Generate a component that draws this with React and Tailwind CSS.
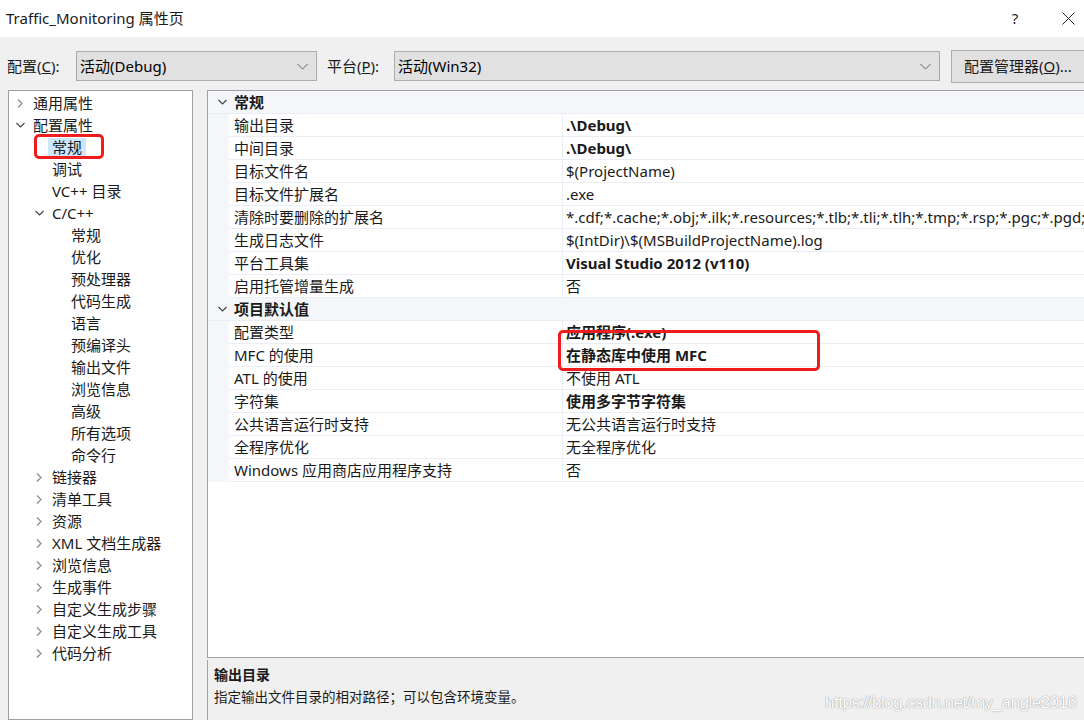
import React from 'react'

const FONT = { fontFamily: '"Noto Sans", "Noto Sans CJK SC", sans-serif' }

const tree = [
  { label: '通用属性', level: 0, chevron: 'right' },
  { label: '配置属性', level: 0, chevron: 'down' },
  { label: '常规', level: 1, selected: true },
  { label: '调试', level: 1 },
  { label: 'VC++ 目录', level: 1 },
  { label: 'C/C++', level: 1, chevron: 'down' },
  { label: '常规', level: 2 },
  { label: '优化', level: 2 },
  { label: '预处理器', level: 2 },
  { label: '代码生成', level: 2 },
  { label: '语言', level: 2 },
  { label: '预编译头', level: 2 },
  { label: '输出文件', level: 2 },
  { label: '浏览信息', level: 2 },
  { label: '高级', level: 2 },
  { label: '所有选项', level: 2 },
  { label: '命令行', level: 2 },
  { label: '链接器', level: 1, chevron: 'right' },
  { label: '清单工具', level: 1, chevron: 'right' },
  { label: '资源', level: 1, chevron: 'right' },
  { label: 'XML 文档生成器', level: 1, chevron: 'right' },
  { label: '浏览信息', level: 1, chevron: 'right' },
  { label: '生成事件', level: 1, chevron: 'right' },
  { label: '自定义生成步骤', level: 1, chevron: 'right' },
  { label: '自定义生成工具', level: 1, chevron: 'right' },
  { label: '代码分析', level: 1, chevron: 'right' },
]

const sections = [
  {
    title: '常规',
    rows: [
      ['输出目录', '.\\Debug\\', true],
      ['中间目录', '.\\Debug\\', true],
      ['目标文件名', '$(ProjectName)'],
      ['目标文件扩展名', '.exe'],
      ['清除时要删除的扩展名', '*.cdf;*.cache;*.obj;*.ilk;*.resources;*.tlb;*.tli;*.tlh;*.tmp;*.rsp;*.pgc;*.pgd;'],
      ['生成日志文件', '$(IntDir)\\$(MSBuildProjectName).log'],
      ['平台工具集', 'Visual Studio 2012 (v110)', true],
      ['启用托管增量生成', '否'],
    ],
  },
  {
    title: '项目默认值',
    rows: [
      ['配置类型', '应用程序(.exe)', true],
      ['MFC 的使用', '在静态库中使用 MFC', true],
      ['ATL 的使用', '不使用 ATL'],
      ['字符集', '使用多字节字符集', true],
      ['公共语言运行时支持', '无公共语言运行时支持'],
      ['全程序优化', '无全程序优化'],
      ['Windows 应用商店应用程序支持', '否'],
    ],
  },
]

function ChevronRight() {
  return (
    <svg width="6" height="9" viewBox="0 0 6 9" className="shrink-0">
      <path d="M1 0.5 L5 4.5 L1 8.5" fill="none" stroke="#8a8a8a" strokeWidth="1.2" />
    </svg>
  )
}

function ChevronDown() {
  return (
    <svg width="9" height="6" viewBox="0 0 9 6" className="shrink-0">
      <path d="M0.5 1 L4.5 5 L8.5 1" fill="none" stroke="#444" strokeWidth="1.2" />
    </svg>
  )
}

function ComboBox({ value, width }) {
  return (
    <div className={`h-[30px] ${width} shrink-0 bg-[#e1e1e1] border border-[#adadad] flex items-center justify-between pl-[3px] pr-[8px] text-[15px] text-black`}>
      <span>{value}</span>
      <svg width="11" height="7" viewBox="0 0 11 7">
        <path d="M0.5 1 L5.5 6 L10.5 1" fill="none" stroke="#606060" strokeWidth="1" />
      </svg>
    </div>
  )
}

function TreeRow({ item }) {
  const textLeft = { 0: 'pl-[24px]', 1: 'pl-[43px]', 2: 'pl-[62px]' }[item.level]
  const chevLeft = { 0: 'left-[5px]', 1: 'left-[24px]', 2: 'left-[43px]' }[item.level]
  return (
    <div className={`relative h-[22px] flex items-center ${textLeft} text-[15px] text-[#1a1a1a] whitespace-nowrap`}>
      {item.chevron && (
        <span className={`absolute ${chevLeft} top-0 h-[22px] w-[12px] flex items-center justify-center`}>
          {item.chevron === 'right' ? <ChevronRight /> : <ChevronDown />}
        </span>
      )}
      <span className={item.selected ? 'bg-[#cce8ff] px-[4px] -mx-[4px] leading-[18px]' : ''}>{item.label}</span>
      {item.selected && (
        <span className="absolute left-[25px] top-[-2px] w-[70px] h-[25px] border-[3px] border-[#f01c1c] rounded-[5px]" />
      )}
    </div>
  )
}

function Section({ section }) {
  return (
    <div>
      <div className="h-[23px] flex items-center bg-[#f4f6fa] border-b border-[#eaeef4]">
        <span className="w-[26px] flex justify-center pl-[2px]">
          <ChevronDown />
        </span>
        <span className="font-bold text-[15px] text-[#1a1a1a]">{section.title}</span>
      </div>
      {section.rows.map(([name, value, bold], i) => (
        <div key={i} className="h-[23px] flex bg-[#f4f6fa]">
          <div className="w-[21px] shrink-0" />
          <div className="w-[334px] shrink-0 bg-white border-r border-b border-[#eaeef4] flex items-center pl-[5px] text-[15px] text-[#1a1a1a] whitespace-nowrap">
            {name}
          </div>
          <div className={`flex-1 min-w-0 bg-white border-b border-[#eaeef4] flex items-center pl-[3px] text-[15px] text-[#1a1a1a] whitespace-nowrap overflow-hidden ${bold ? 'font-bold' : ''}`}>
            {value}
          </div>
        </div>
      ))}
    </div>
  )
}

export default function App() {
  return (
    <div className="w-[1084px] h-[720px] bg-[#f0f0f0] overflow-hidden relative" style={FONT}>
      {/* title bar */}
      <div className="h-[37px] bg-white flex items-center justify-between pl-[6px]">
        <span className="text-[15px] text-[#1a1a1a]">Traffic_Monitoring 属性页</span>
        <div className="flex items-center h-full">
          <span className="text-[15px] text-[#222] w-[46px] text-center">?</span>
          <span className="w-[46px] flex justify-center pl-[14px]">
            <svg width="13" height="13" viewBox="0 0 13 13">
              <path d="M0.5 0.5 L12.5 12.5 M12.5 0.5 L0.5 12.5" stroke="#222" strokeWidth="1" />
            </svg>
          </span>
        </div>
      </div>

      {/* toolbar */}
      <div className="h-[58px] flex items-center pl-[7px] text-[15px] text-[#1a1a1a]">
        <span className="w-[69px] shrink-0">配置(<u>C</u>):</span>
        <ComboBox value="活动(Debug)" width="w-[241px]" />
        <span className="ml-[10px] w-[67px] shrink-0">平台(<u>P</u>):</span>
        <ComboBox value="活动(Win32)" width="w-[546px]" />
        <div className="ml-[11px] h-[33px] w-[140px] shrink-0 bg-[#e1e1e1] border border-[#adadad] flex items-center pl-[12px] whitespace-nowrap">
          配置管理器(<u>O</u>)...
        </div>
      </div>

      {/* main area */}
      <div className="flex h-[630px] -mt-[5px]">
        <div className="ml-[8px] w-[185px] shrink-0 h-full bg-white border border-[#a0a0a0] pt-[1px] overflow-hidden">
          {tree.map((item, i) => (
            <TreeRow key={i} item={item} />
          ))}
        </div>

        <div className="ml-[14px] w-[900px] shrink-0 h-full flex flex-col">
          <div className="h-[568px] bg-white border border-[#a0a0a0] relative overflow-hidden">
            {sections.map((s, i) => (
              <Section key={i} section={s} />
            ))}
            <div className="absolute left-[350px] top-[239px] w-[262px] h-[41px] border-[3px] border-[#f01c1c] rounded-[5px]" />
          </div>
          <div className="flex-1 mt-[2px] border-l border-[#a0a0a0] pl-[6px] pt-[4px] text-[#1a1a1a] relative">
            <div className="text-[14px] font-bold leading-[22px]">输出目录</div>
            <div className="text-[13.5px] leading-[22px]">指定输出文件目录的相对路径；可以包含环境变量。</div>
            <span className="absolute left-[617px] top-[30px] text-[17px] text-white tracking-[-0.5px]" style={{ textShadow: '0 0 1px #9a9a9a, 0 0 1px #9a9a9a', fontFamily: '"Liberation Sans Narrow", "Liberation Sans", sans-serif' }}>
              https://blog.csdn.net/my_angle2016
            </span>
          </div>
        </div>
      </div>
    </div>
  )
}
